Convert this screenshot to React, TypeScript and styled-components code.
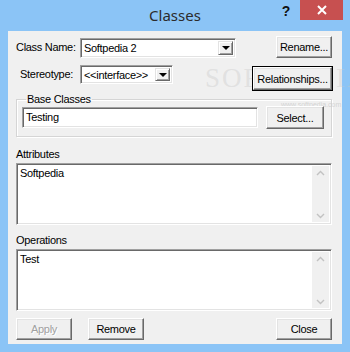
import React from "react";
import styled, { createGlobalStyle } from "styled-components";

const GlobalStyle = createGlobalStyle`
  html, body {
    margin: 0;
    padding: 0;
  }
  body {
    font-family: "Liberation Sans", Arial, sans-serif;
    font-size: 11px;
    letter-spacing: -0.3px;
    color: #000;
    background: #8bc4f6;
  }
`;

const Frame = styled.div`
  position: relative;
  width: 350px;
  height: 352px;
  background: #8bc4f6;
  display: flex;
  flex-direction: column;
  overflow: hidden;
`;

const TitleBar = styled.div`
  height: 31px;
  display: grid;
  grid-template-columns: 1fr auto 1fr;
  align-items: start;
`;

const Title = styled.div`
  grid-column: 2;
  padding-top: 5px;
  font-family: "Noto Sans", "Open Sans", sans-serif;
  font-size: 15px;
  letter-spacing: 0;
  color: #2b2b2b;
`;

const Caption = styled.div`
  grid-column: 3;
  justify-self: end;
  display: flex;
  align-items: flex-start;
  margin-right: 7px;
`;

const HelpGlyph = styled.span`
  font-weight: bold;
  font-size: 14px;
  color: #111;
  margin-top: 3px;
  margin-right: 10px;
`;

const CloseBox = styled.div`
  width: 43px;
  height: 20px;
  background: #c75050;
  display: flex;
  align-items: center;
  justify-content: center;
`;

const Client = styled.div`
  flex: 1;
  margin: 0 8px 8px;
  background: #f0f0f0;
  padding: 5px 10px 0 8px;
  display: flex;
  flex-direction: column;
`;

const Row = styled.div<{ $top?: number }>`
  display: flex;
  align-items: flex-start;
  margin-top: ${(p) => p.$top ?? 0}px;
`;

const FieldLabel = styled.label<{ $top: number }>`
  width: 57px;
  text-align: right;
  margin-right: 7px;
  margin-top: ${(p) => p.$top}px;
  white-space: nowrap;
`;

const sunken = `
  border-top: 1px solid #a0a0a0;
  border-left: 1px solid #a0a0a0;
  border-right: 1px solid #ffffff;
  border-bottom: 1px solid #ffffff;
  box-shadow: inset 1px 1px 0 #696969, inset -1px -1px 0 #e3e3e3;
`;

const Combo = styled.div<{ $w: number; $h: number; $top: number }>`
  ${sunken}
  box-sizing: border-box;
  width: ${(p) => p.$w}px;
  height: ${(p) => p.$h}px;
  margin-top: ${(p) => p.$top}px;
  background: #fff;
  display: flex;
  align-items: stretch;
  padding: 2px;
`;

const ComboText = styled.div`
  flex: 1;
  padding-left: 1px;
  line-height: 14px;
  white-space: nowrap;
  overflow: hidden;
`;

const DropButton = styled.div`
  width: 15px;
  box-sizing: border-box;
  background: #f0f0f0;
  border-top: 1px solid #e3e3e3;
  border-left: 1px solid #e3e3e3;
  border-right: 1px solid #696969;
  border-bottom: 1px solid #696969;
  box-shadow: inset 1px 1px 0 #fff, inset -1px -1px 0 #a0a0a0;
  display: flex;
  align-items: center;
  justify-content: center;
`;

const Arrow = styled.div`
  width: 0;
  height: 0;
  border-left: 4px solid transparent;
  border-right: 4px solid transparent;
  border-top: 4px solid #000;
`;

const Button = styled.button<{ $w: number; $h?: number; $top?: number; $default?: boolean }>`
  position: relative;
  box-sizing: border-box;
  width: ${(p) => p.$w}px;
  height: ${(p) => p.$h ?? 22}px;
  margin-top: ${(p) => p.$top ?? 0}px;
  padding: 0;
  font-family: "Liberation Sans", Arial, sans-serif;
  font-size: 11px;
  letter-spacing: -0.3px;
  white-space: nowrap;
  color: #000;
  background: #f0f0f0;
  border-top: 1px solid #fff;
  border-left: 1px solid #fff;
  border-right: 1px solid #696969;
  border-bottom: 1px solid #696969;
  box-shadow: inset -1px -1px 0 #a0a0a0, inset 1px 1px 0 #e3e3e3;
  outline: ${(p) => (p.$default ? "1px solid #000" : "none")};
  outline-offset: 0;
  &:disabled {
    color: #a0a0a0;
    text-shadow: 1px 1px 0 #fff;
  }
`;

const Spacer = styled.div`
  flex: 1;
`;

const Group = styled.fieldset`
  margin: 3px 0 0;
  padding: 0 7px 7px 5px;
  min-width: 0;
  border: 1px solid #d5d5d5;
  box-shadow: inset 1px 1px 0 #fff, 1px 1px 0 #fff;
  display: flex;
  align-items: flex-start;
  gap: 8px;
`;

const Legend = styled.legend`
  padding: 0 1px;
  margin-left: 4px;
  line-height: 13px;
`;

const TextBox = styled.div<{ $w: number }>`
  ${sunken}
  box-sizing: border-box;
  width: ${(p) => p.$w}px;
  height: 21px;
  margin-top: 1px;
  background: #fff;
  padding: 3px 3px;
  line-height: 13px;
`;

const SectionLabel = styled.div<{ $top: number }>`
  margin-top: ${(p) => p.$top}px;
  line-height: 13px;
`;

const ListBox = styled.div`
  ${sunken}
  box-sizing: border-box;
  margin-top: 2px;
  height: 62px;
  background: #fff;
  display: flex;
  padding: 2px;
`;

const ListItems = styled.div`
  flex: 1;
  padding: 1px 1px;
  line-height: 13px;
`;

const ScrollBar = styled.div`
  width: 17px;
  background: #f0f0f0;
  display: flex;
  flex-direction: column;
  justify-content: space-between;
  align-items: center;
  padding: 4px 0 3px;
`;

const ButtonRow = styled.div`
  margin-top: 7px;
  display: flex;
  gap: 16px;
`;

const Watermark = styled.div`
  position: absolute;
  left: 205px;
  top: 64px;
  pointer-events: none;
  color: rgba(200, 200, 200, 0.4);
  font-family: "Liberation Serif", serif;
  font-size: 27px;
  letter-spacing: 2px;
  line-height: 28px;
`;

const WatermarkUrl = styled.div`
  position: absolute;
  left: 281px;
  top: 101px;
  pointer-events: none;
  color: rgba(190, 190, 190, 0.6);
  font-size: 7px;
  letter-spacing: 0;
`;

const Chevron = ({ up }: { up?: boolean }) => (
  <svg width="9" height="6" viewBox="0 0 9 6">
    <path
      d={up ? "M1 5 L4.5 1.5 L8 5" : "M1 1 L4.5 4.5 L8 1"}
      fill="none"
      stroke="#c2c2c2"
      strokeWidth="1.4"
    />
  </svg>
);

const List = ({ items }: { items: string[] }) => (
  <ListBox>
    <ListItems>
      {items.map((i) => (
        <div key={i}>{i}</div>
      ))}
    </ListItems>
    <ScrollBar>
      <Chevron up />
      <Chevron />
    </ScrollBar>
  </ListBox>
);

export default function App() {
  return (
    <>
      <GlobalStyle />
      <Frame>
        <Watermark>SOFTPEDIA</Watermark>
        <WatermarkUrl>www.softpedia.com</WatermarkUrl>
        <TitleBar>
          <Title>Classes</Title>
          <Caption>
            <HelpGlyph>?</HelpGlyph>
            <CloseBox>
              <svg width="10" height="10" viewBox="0 0 10 10">
                <path d="M1 1 L9 9 M9 1 L1 9" stroke="#fff" strokeWidth="2" />
              </svg>
            </CloseBox>
          </Caption>
        </TitleBar>
        <Client>
          <Row>
            <FieldLabel $top={5}>Class Name:</FieldLabel>
            <Combo $w={156} $h={20} $top={2}>
              <ComboText>Softpedia 2</ComboText>
              <DropButton>
                <Arrow />
              </DropButton>
            </Combo>
            <Spacer />
            <Button $w={56}>Rename...</Button>
          </Row>
          <Row $top={7}>
            <FieldLabel $top={3}>Stereotype:</FieldLabel>
            <Combo $w={93} $h={19} $top={0}>
              <ComboText>&lt;&lt;interface&gt;&gt;</ComboText>
              <DropButton>
                <Arrow />
              </DropButton>
            </Combo>
            <Spacer />
            <Button $w={79} $h={23} $top={2} $default>
              Relationships...
            </Button>
          </Row>
          <Group>
            <Legend>Base Classes</Legend>
            <TextBox $w={236}>Testing</TextBox>
            <Button $w={58} $h={23}>
              Select...
            </Button>
          </Group>
          <SectionLabel $top={11}>Attributes</SectionLabel>
          <List items={["Softpedia"]} />
          <SectionLabel $top={9}>Operations</SectionLabel>
          <List items={["Test"]} />
          <ButtonRow>
            <Button $w={56} disabled>
              Apply
            </Button>
            <Button $w={56}>Remove</Button>
            <Spacer />
            <Button $w={56}>Close</Button>
          </ButtonRow>
        </Client>
      </Frame>
    </>
  );
}
